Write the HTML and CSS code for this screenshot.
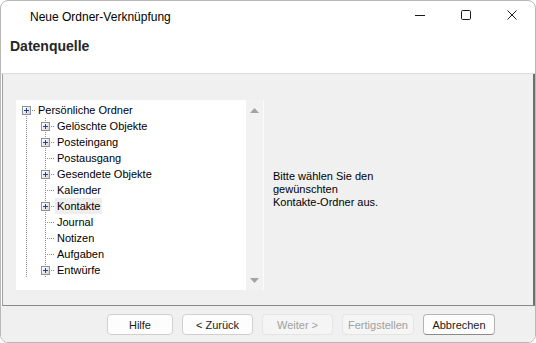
FILE: index.html
```html
<!DOCTYPE html>
<html lang="de">
<head>
<meta charset="utf-8">
<title>Neue Ordner-Verknüpfung</title>
<link rel="stylesheet" href="styles.css">
</head>
<body>
<div class="window">
  <div class="titlebar">
    <div class="title">Neue Ordner-Verknüpfung</div>
    <div class="controls">
      <div class="ctl"><svg width="10" height="10" viewBox="0 0 10 10"><path d="M0 5.5H10" stroke="#1a1a1a" stroke-width="1"/></svg></div>
      <div class="ctl"><svg width="10" height="10" viewBox="0 0 10 10"><rect x="0.5" y="0.5" width="9" height="9" rx="1.2" fill="none" stroke="#1a1a1a" stroke-width="1"/></svg></div>
      <div class="ctl"><svg width="10" height="10" viewBox="0 0 10 10"><path d="M0.5 0.5L9.5 9.5M9.5 0.5L0.5 9.5" stroke="#1a1a1a" stroke-width="1"/></svg></div>
    </div>
  </div>
  <div class="header">Datenquelle</div>
  <div class="body">
    <div class="treebox">
      <div class="tree">
        <div class="row"><span class="cell root"><span class="pm"></span></span><span class="label">Persönliche Ordner</span></div>
        <div class="row"><span class="cell v"></span><span class="cell v h"><span class="pm"></span></span><span class="label">Gelöschte Objekte</span></div>
        <div class="row"><span class="cell v"></span><span class="cell v h"><span class="pm"></span></span><span class="label">Posteingang</span></div>
        <div class="row"><span class="cell v"></span><span class="cell v h"></span><span class="label">Postausgang</span></div>
        <div class="row"><span class="cell v"></span><span class="cell v h"><span class="pm"></span></span><span class="label">Gesendete Objekte</span></div>
        <div class="row"><span class="cell v"></span><span class="cell v h"></span><span class="label">Kalender</span></div>
        <div class="row"><span class="cell v"></span><span class="cell v h"><span class="pm"></span></span><span class="label selected">Kontakte</span></div>
        <div class="row"><span class="cell v"></span><span class="cell v h"></span><span class="label">Journal</span></div>
        <div class="row"><span class="cell v"></span><span class="cell v h"></span><span class="label">Notizen</span></div>
        <div class="row"><span class="cell v"></span><span class="cell v h"></span><span class="label">Aufgaben</span></div>
        <div class="row"><span class="cell v"></span><span class="cell v h"><span class="pm"></span></span><span class="label">Entwürfe</span></div>
      </div>
      <div class="scrollbar">
        <svg width="9" height="5" viewBox="0 0 9 5"><polygon points="4.5,0 9,5 0,5" fill="#a3a3a3"/></svg>
        <svg width="9" height="5" viewBox="0 0 9 5"><polygon points="0,0 9,0 4.5,5" fill="#a3a3a3"/></svg>
      </div>
    </div>
    <div class="info">Bitte wählen Sie den<br>gewünschten<br>Kontakte-Ordner aus.</div>
  </div>
  <div class="footer">
    <button class="btn w66">Hilfe</button>
    <button class="btn">&lt; Zurück</button>
    <button class="btn disabled">Weiter &gt;</button>
    <button class="btn w72 disabled">Fertigstellen</button>
    <button class="btn w72 default">Abbrechen</button>
  </div>
</div>
</body>
</html>
```
FILE: styles.css
```css
html, body {
  margin: 0;
  padding: 0;
  background: #ffffff;
}
body {
  font-family: "Liberation Sans", Arial, sans-serif;
  color: #000;
}
.window {
  width: 536px;
  height: 343px;
  box-sizing: border-box;
  border: 1px solid #b8b8b8;
  border-radius: 8px;
  overflow: hidden;
  display: flex;
  flex-direction: column;
  background: #fff;
}
.titlebar {
  height: 31px;
  flex: none;
  display: flex;
  justify-content: space-between;
  align-items: flex-start;
}
.title {
  font-size: 12px;
  line-height: 16px;
  padding: 8px 0 0 29px;
  color: #000;
}
.controls {
  display: flex;
  padding-top: 9px;
}
.ctl {
  width: 46px;
  height: 10px;
  display: flex;
  justify-content: center;
}
.ctl svg { display: block; }
.header {
  flex: none;
  box-sizing: border-box;
  height: 42px;
  border-bottom: 1px solid #dcdcdc;
  font-size: 14px;
  font-weight: bold;
  line-height: 16px;
  padding: 6px 0 0 9px;
  color: #262626;
}
.body {
  height: 232px;
  flex: none;
  box-sizing: border-box;
  margin-left: 1px;
  border-left: 1px solid #a0a0a0;
  border-right: 2px solid #6f6f6f;
  border-bottom: 1px solid #8a8a8a;
  background: #f0f0f0;
  padding: 26px 0 0 13px;
  display: flex;
  align-items: flex-start;
  gap: 9px;
}
.treebox {
  width: 248px;
  height: 190px;
  display: flex;
  background: #fff;
  flex: none;
}
.tree {
  width: 230px;
  padding: 2px 0 0 1px;
  box-sizing: border-box;
  font-size: 11px;
  line-height: 16px;
}
.row {
  display: flex;
  height: 16px;
}
.cell {
  width: 19px;
  height: 16px;
  flex: none;
  display: flex;
  justify-content: center;
  align-items: flex-start;
  padding-top: 4px;
  box-sizing: border-box;
  background-repeat: no-repeat;
}
.cell.v {
  background-image: repeating-linear-gradient(to bottom, #8f8f8f 0 1px, transparent 1px 2px);
  background-size: 1px 16px;
  background-position: 9px 0;
}
.cell.v.h {
  background-image:
    repeating-linear-gradient(to bottom, #8f8f8f 0 1px, transparent 1px 2px),
    repeating-linear-gradient(to right, #8f8f8f 0 1px, transparent 1px 2px);
  background-size: 1px 16px, 10px 1px;
  background-position: 9px 0, 9px 8px;
}
.cell.root {
  background-image:
    repeating-linear-gradient(to bottom, #8f8f8f 0 1px, transparent 1px 2px),
    repeating-linear-gradient(to right, #8f8f8f 0 1px, transparent 1px 2px);
  background-size: 1px 8px, 10px 1px;
  background-position: 9px 8px, 9px 8px;
}
.pm {
  width: 9px;
  height: 9px;
  box-sizing: border-box;
  border: 1px solid #919191;
  background:
    linear-gradient(#1f3f8f, #1f3f8f) 1px 3px / 5px 1px no-repeat,
    linear-gradient(#1f3f8f, #1f3f8f) 3px 1px / 1px 5px no-repeat,
    linear-gradient(135deg, #ffffff, #d6d6d6);
}
.label {
  padding: 0 2px;
  height: 16px;
  white-space: nowrap;
  color: #000;
}
.label.selected {
  background: #eeeeee;
}
.scrollbar {
  width: 18px;
  flex: none;
  background: #f2f2f2;
  border-right: 1px solid #fbfbfb;
  display: flex;
  flex-direction: column;
  justify-content: space-between;
  align-items: flex-start;
  padding: 8px 0 7px 4px;
  box-sizing: border-box;
}
.scrollbar svg { display: block; }
.info {
  margin-top: 70px;
  font-size: 11px;
  line-height: 13px;
  color: #000;
}
.footer {
  flex: 1;
  background: #f0f0f0;
  display: flex;
  align-items: flex-start;
  padding: 8px 0 0 106px;
  gap: 9px;
}
.btn {
  width: 71px;
  height: 21px;
  padding: 0;
  margin: 0;
  border: 1px solid #d0d0d0;
  border-radius: 4px;
  background: #fdfdfd;
  font-family: "Liberation Sans", Arial, sans-serif;
  font-size: 11px;
  color: #1a1a1a;
  display: flex;
  align-items: center;
  justify-content: center;
}
.btn.w66 { width: 66px; }
.btn.w72 { width: 72px; }
.btn.disabled {
  background: #f5f5f5;
  border-color: #e5e5e5;
  color: #a0a0a0;
}
.btn.default {
  border-color: #b4b4b4;
  border-bottom-color: #8c8c8c;
}
```
